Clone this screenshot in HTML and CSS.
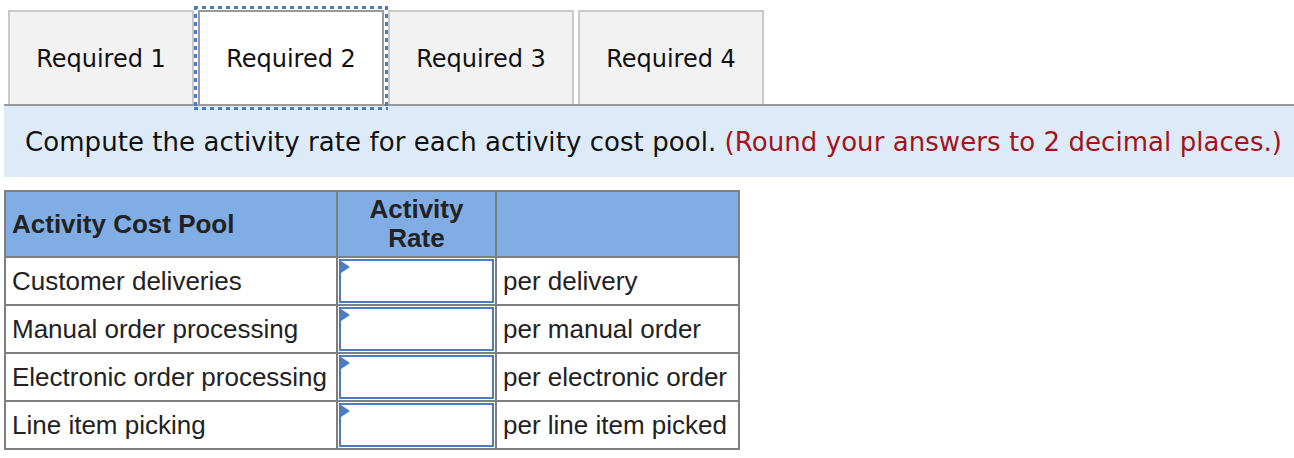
FILE: index.html
```html
<!DOCTYPE html>
<html>
<head>
<meta charset="utf-8">
<link rel="stylesheet" href="styles.css">
</head>
<body>
<div class="page">
  <div class="tabs">
    <div class="tab">Required 1</div>
    <div class="tab active">Required 2</div>
    <div class="tab">Required 3</div>
    <div class="tab">Required 4</div>
  </div>
  <div class="rule"></div>
  <div class="panel">Compute the activity rate for each activity cost pool. <span class="note">(Round your answers to 2 decimal places.)</span></div>
  <table class="grid">
    <colgroup><col class="c1"><col class="c2"><col class="c3"></colgroup>
    <thead>
      <tr><th class="left">Activity Cost Pool</th><th class="center">Activity<br>Rate</th><th></th></tr>
    </thead>
    <tbody>
      <tr><td>Customer deliveries</td><td class="inp"><div class="box"></div></td><td>per delivery</td></tr>
      <tr><td>Manual order processing</td><td class="inp"><div class="box"></div></td><td>per manual order</td></tr>
      <tr><td>Electronic order processing</td><td class="inp"><div class="box"></div></td><td>per electronic order</td></tr>
      <tr><td>Line item picking</td><td class="inp"><div class="box"></div></td><td>per line item picked</td></tr>
    </tbody>
  </table>
</div>
</body>
</html>
```
FILE: styles.css
```css
html, body {
  margin: 0;
  padding: 0;
  background: #fff;
}
.page {
  padding: 10px 0 0 4px;
}
.tabs {
  display: flex;
  gap: 4px;
  padding-left: 4px;
}
.tab {
  position: relative;
  box-sizing: border-box;
  width: 186px;
  height: 94px;
  border: 2px solid #c9c9c9;
  border-bottom: none;
  background: #f2f2f2;
  font-family: "DejaVu Sans", Verdana, sans-serif;
  font-size: 24px;
  color: #111;
  display: flex;
  align-items: center;
  justify-content: center;
  padding-top: 2px;
}
.tab.active {
  background: #fff;
  border-color: #9a9a9a;
}
.tab.active::after {
  content: "";
  position: absolute;
  left: -6px;
  right: -6px;
  top: -6px;
  bottom: -6px;
  background:
    repeating-linear-gradient(90deg, #4a7cc4 0 4px, transparent 4px 8px) left top / 100% 3px no-repeat,
    repeating-linear-gradient(90deg, #4a7cc4 0 4px, transparent 4px 8px) left bottom / 100% 3px no-repeat,
    repeating-linear-gradient(180deg, #4a7cc4 0 4px, transparent 4px 8px) left top / 3px 100% no-repeat,
    repeating-linear-gradient(180deg, #4a7cc4 0 4px, transparent 4px 8px) right top / 3px 100% no-repeat;
  z-index: 2;
}
.rule {
  height: 2px;
  background: #999;
}
.panel {
  box-sizing: border-box;
  height: 71px;
  background: #ddebf8;
  padding: 0 0 0 21px;
  display: flex;
  align-items: center;
  font-family: "DejaVu Sans", Verdana, sans-serif;
  font-size: 26px;
  letter-spacing: 0.06px;
  color: #111;
  white-space: pre;
}
.note {
  color: #a3131c;
}
.grid {
  margin-top: 13px;
  border-collapse: collapse;
  width: 734px;
  table-layout: fixed;
  font-family: "Liberation Sans", Arial, sans-serif;
  font-size: 26px;
  color: #222;
  border: 2px solid #7f7f7f;
}
.c1 { width: 332px; }
.c2 { width: 159px; }
.c3 { width: 243px; }
.grid th, .grid td {
  border: 2px solid #7f7f7f;
  padding: 0 6px;
}
.grid th {
  background: #80ade3;
  height: 64px;
  font-weight: bold;
  line-height: 29px;
}
.grid th.left { text-align: left; }
.grid th.center { text-align: center; }
.grid td {
  height: 44px;
  white-space: nowrap;
}
.grid td.inp {
  padding: 1px;
}
.box {
  position: relative;
  box-sizing: border-box;
  height: 44px;
  border: 2px solid #4a7cc0;
  background: #fff;
}
.box::before {
  content: "";
  position: absolute;
  left: 0;
  top: 0;
  border-left: 9px solid #4a7cc0;
  border-top: 6px solid transparent;
  border-bottom: 6px solid transparent;
}
```
